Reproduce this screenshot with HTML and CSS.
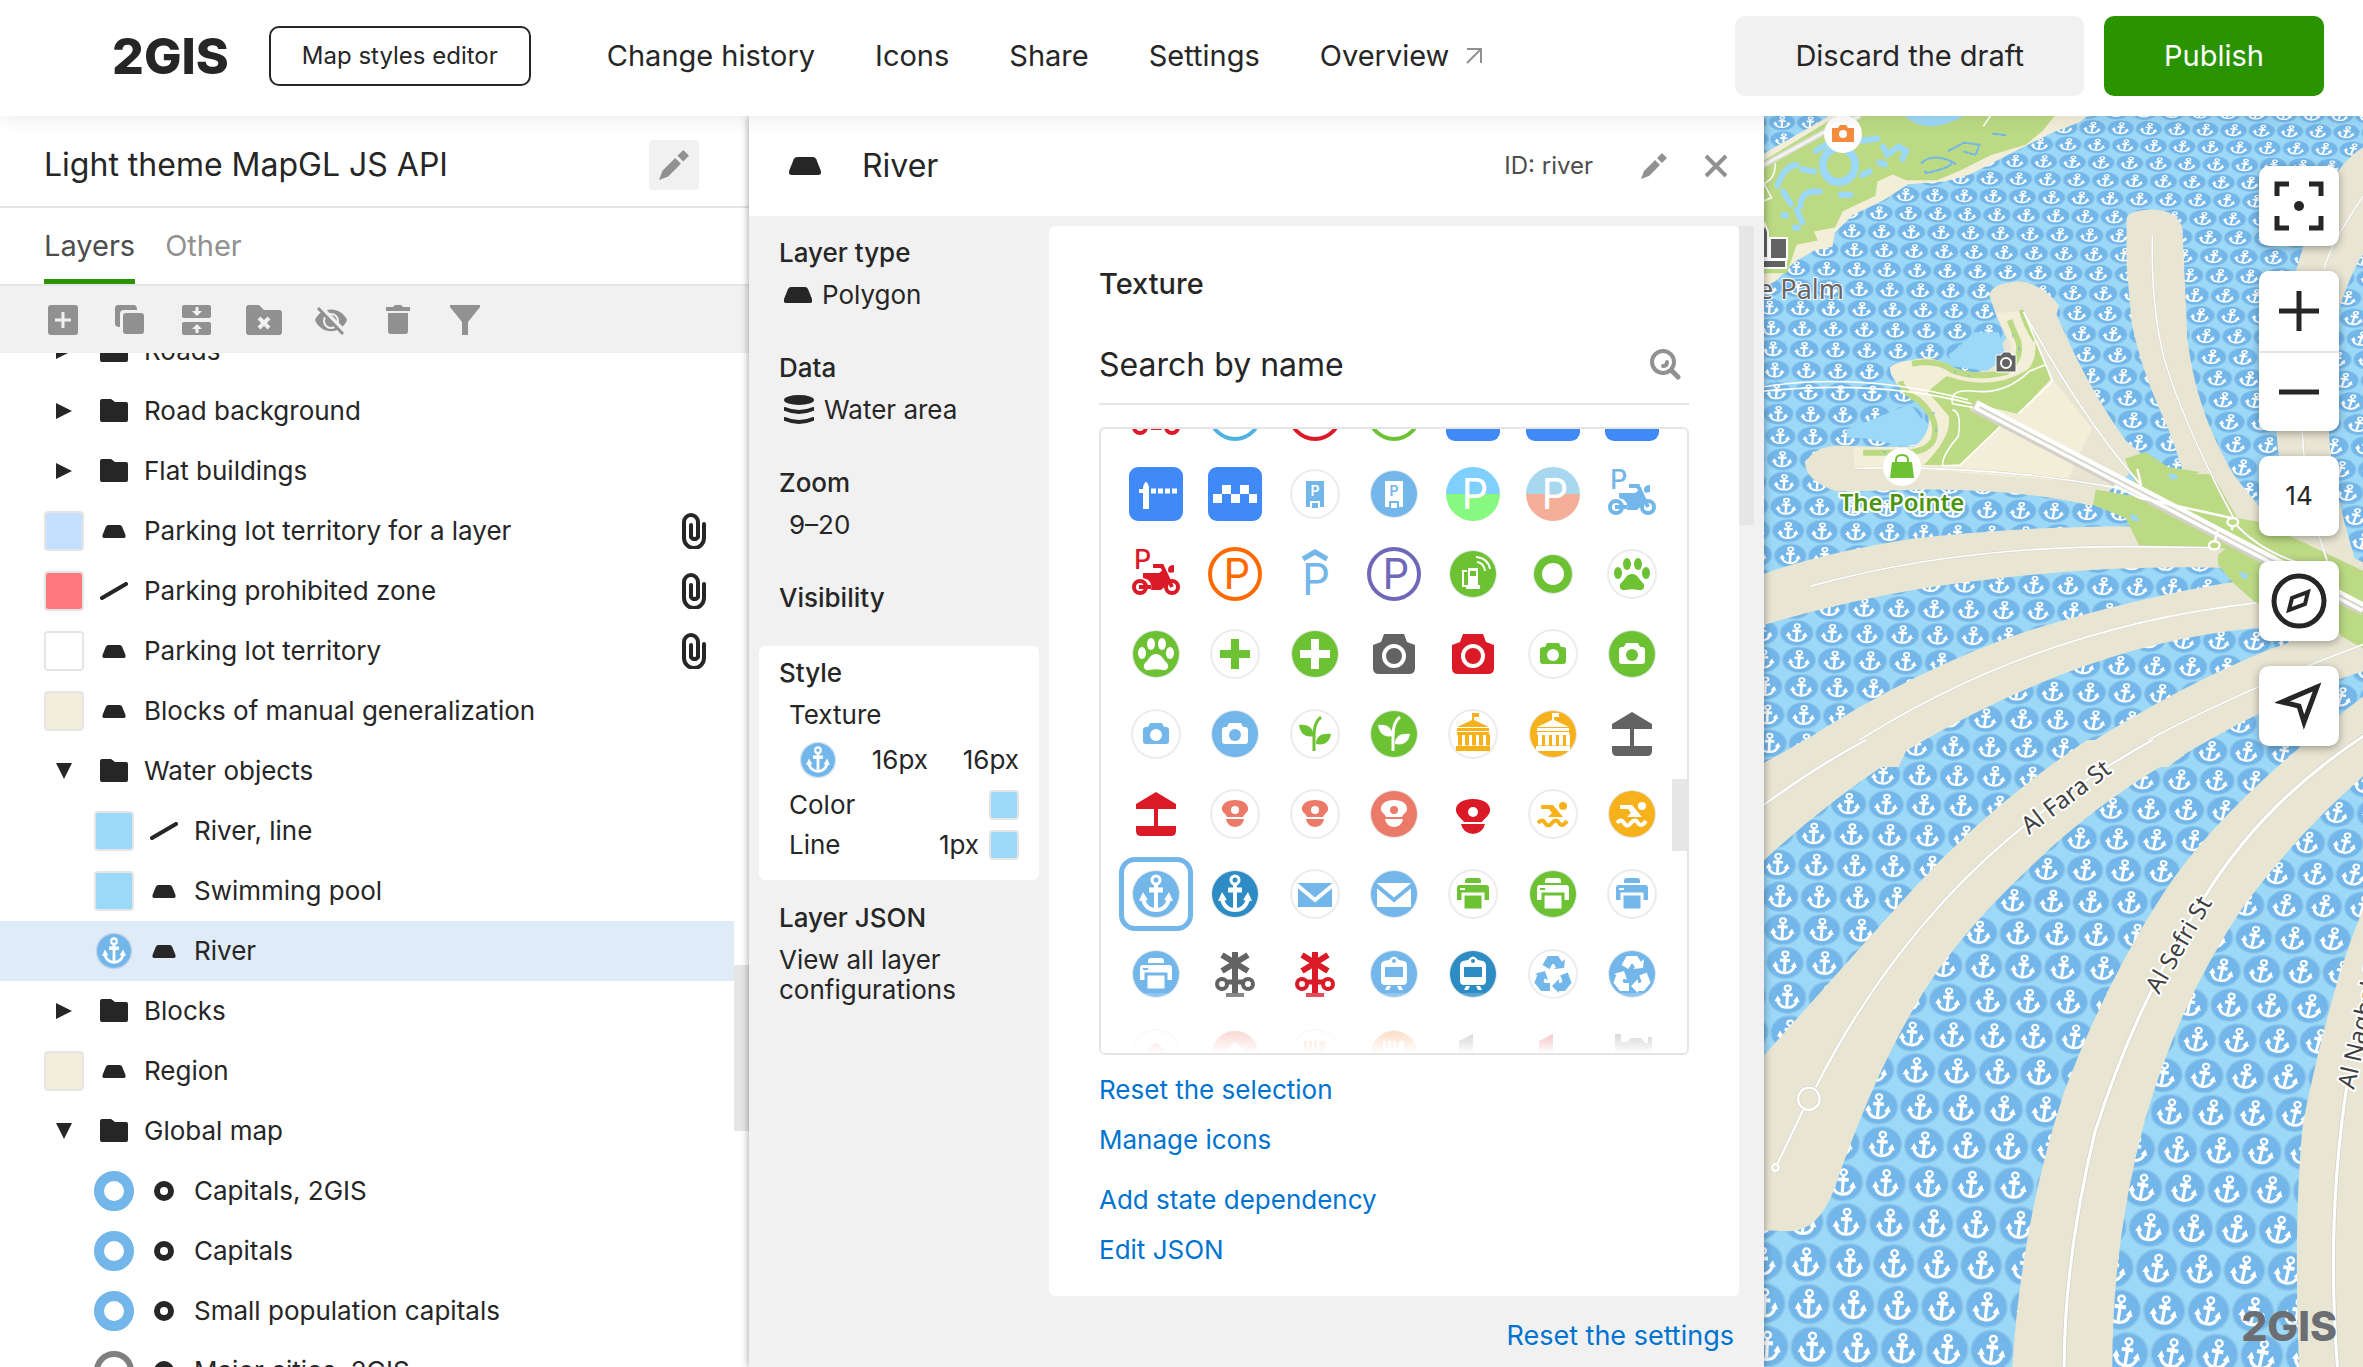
FILE: index.html
```html
<!DOCTYPE html>
<html lang="en">
  <head>
    <meta charset="UTF-8" />
    <meta name="viewport" content="width=device-width, initial-scale=1.0" />
    <title>Map styles editor</title>
    <link rel="stylesheet" href="styles.css">
  </head>
  <body>
    <svg class="sprite" aria-hidden="true">
      <symbol id="folder" viewBox="0 0 28 24">
        <path d="M2 0h9l4 3h11a2 2 0 0 1 2 2v16a2 2 0 0 1-2 2H2a2 2 0 0 1-2-2V2a2 2 0 0 1 2-2z" />
      </symbol>
      <symbol id="polygon" viewBox="0 0 28 16">
        <path d="M7 0h14q2 0 3 2l4 10q1 4-2 4H2q-3 0-2-4L4 2q1-2 3-2z" />
      </symbol>
      <symbol id="line" viewBox="0 0 28 18">
        <path d="M2 16L26 2" stroke="#262626" stroke-width="4" stroke-linecap="round" />
      </symbol>
      <symbol id="point" viewBox="0 0 20 20">
        <circle cx="10" cy="10" r="7" fill="none" stroke="#262626" stroke-width="6" />
      </symbol>
      <symbol id="clip" viewBox="0 0 24 36">
        <path d="M22 11v14a9 9 0 0 1-20 0V9a7 7 0 0 1 14 0v15a4 4 0 0 1-7 0V12" fill="none" stroke="#262626" stroke-width="4" stroke-linecap="round" />
      </symbol>
      <symbol id="closed" viewBox="0 0 16 16"><path d="M0 0l16 8-16 8z" /></symbol>
      <symbol id="opened" viewBox="0 0 16 16"><path d="M0 0h16L8 16z" /></symbol>
      <symbol id="pencil" viewBox="0 0 26 26">
        <path d="M21 0l5 5-5 5-5-5zM14 7l5 5L8 23l-8 3 3-8z" />
      </symbol>
      <symbol id="anchor" viewBox="0 0 54 54">
        <g fill="none" stroke="#fff">
          <circle cx="27" cy="13" r="4" stroke-width="3" />
          <path d="M27 17v24" stroke-width="4" />
          <path d="M20 23h14" stroke-width="5" />
          <path d="M14 32c2 8 7 11 13 11s11-3 13-11" stroke-width="4" />
        </g>
        <path d="M10 34l4-9 5 8zM44 34l-4-9-5 8z" fill="#fff" />
      </symbol>
      <symbol id="river" viewBox="0 0 54 54">
        <circle cx="27" cy="27" r="26" fill="#6495c4" opacity=".25" />
        <circle cx="27" cy="27" r="24" fill="#72b6ea" />
        <use href="#anchor" />
      </symbol>
    </svg>

    <header class="header">
      <a class="logo" href="#">2GIS</a>
      <button class="product">Map styles editor</button>
      <nav class="nav">
        <a href="#">Change history</a>
        <a href="#">Icons</a>
        <a href="#">Share</a>
        <a href="#">Settings</a>
        <a href="#">Overview
          <svg width="18" height="18" viewBox="0 0 18 18" fill="none" stroke="#919191" stroke-width="2"><path d="M2 2h14v14M16 2L2 16" /></svg>
        </a>
      </nav>
      <button class="btn">Discard the draft</button>
      <button class="btn btn-primary">Publish</button>
    </header>

    <main class="main">
      <section class="layers">
        <div class="theme">
          <h1>Light theme MapGL JS API</h1>
          <button class="edit" aria-label="Rename"><svg width="30" height="30"><use href="#pencil" /></svg></button>
        </div>
        <div class="tabs">
          <button class="tab active">Layers</button>
          <button class="tab">Other</button>
        </div>
        <div class="toolbar">
          <button aria-label="Add"><svg width="30" height="30" viewBox="0 0 30 30"><rect width="30" height="30" rx="3" /><path d="M15 7v16M7 15h16" stroke="#f1f1f1" stroke-width="3" /></svg></button>
          <button aria-label="Copy"><svg width="30" height="30" viewBox="0 0 30 30"><path d="M3 0h16q3 0 3 5H9q-4 0-4 4v13q-5 0-5-3V3q0-3 3-3z" /><rect x="8" y="8" width="21" height="21" rx="3" /></svg></button>
          <button aria-label="Group"><svg width="30" height="30" viewBox="0 0 30 30"><rect y="0" width="29" height="13" rx="2" /><rect y="17" width="29" height="13" rx="2" /><path d="M15 2v6M15 28v-6" stroke="#f1f1f1" stroke-width="3" /><path d="M10 6h10l-5 5zM10 24h10l-5-5z" fill="#f1f1f1" /></svg></button>
          <button aria-label="Ungroup"><svg width="36" height="30" viewBox="0 0 36 30"><path d="M3 0h10l5 5h15q3 0 3 3v19q0 3-3 3H3q-3 0-3-3V3q0-3 3-3z" /><path d="M13 13l10 10M23 13L13 23" stroke="#f1f1f1" stroke-width="4" /></svg></button>
          <button aria-label="Hide"><svg width="32" height="30" viewBox="0 0 32 30"><path d="M0 15C6 1 26 1 32 15 26 30 6 30 0 15z" /><circle cx="16" cy="16" r="7" fill="none" stroke="#f1f1f1" stroke-width="2" /><circle cx="16" cy="16" r="2" fill="#f1f1f1" /><path d="M6 2l25 26" stroke="#f1f1f1" stroke-width="4" /><path d="M3 3l25 26" stroke="#919191" stroke-width="3" /></svg></button>
          <button aria-label="Delete"><svg width="24" height="30" viewBox="0 0 24 30"><path d="M2 8h20v18q0 3-3 3H5q-3 0-3-3zM0 2h7l2-2h6l2 2h7v4H0z" /></svg></button>
          <button aria-label="Filter"><svg width="30" height="30" viewBox="0 0 30 30"><path d="M0 0h30v2L18 17v13h-6V17L0 2z" /></svg></button>
        </div>
        <div class="tree-box">
          <ul class="tree">
            <li><svg class="mark" width="16" height="16"><use href="#closed" /></svg><svg class="kind" width="28" height="24"><use href="#folder" /></svg>Roads</li>
            <li><svg class="mark" width="16" height="16"><use href="#closed" /></svg><svg class="kind" width="28" height="24"><use href="#folder" /></svg>Road background</li>
            <li><svg class="mark" width="16" height="16"><use href="#closed" /></svg><svg class="kind" width="28" height="24"><use href="#folder" /></svg>Flat buildings</li>
            <li><span class="swatch pale-blue"></span><svg class="kind" width="28" height="13"><use href="#polygon" /></svg>Parking lot territory for a layer<svg class="clip" width="24" height="36"><use href="#clip" /></svg></li>
            <li><span class="swatch red"></span><svg class="kind" width="28" height="18"><use href="#line" /></svg>Parking prohibited zone<svg class="clip" width="24" height="36"><use href="#clip" /></svg></li>
            <li><span class="swatch"></span><svg class="kind" width="28" height="13"><use href="#polygon" /></svg>Parking lot territory<svg class="clip" width="24" height="36"><use href="#clip" /></svg></li>
            <li><span class="swatch sand"></span><svg class="kind" width="28" height="13"><use href="#polygon" /></svg>Blocks of manual generalization</li>
            <li><svg class="mark" width="16" height="16"><use href="#opened" /></svg><svg class="kind" width="28" height="24"><use href="#folder" /></svg>Water objects</li>
            <li class="nested"><span class="swatch water"></span><svg class="kind" width="28" height="18"><use href="#line" /></svg>River, line</li>
            <li class="nested"><span class="swatch water"></span><svg class="kind" width="28" height="13"><use href="#polygon" /></svg>Swimming pool</li>
            <li class="nested selected"><svg class="mark" width="38" height="38"><use href="#river" /></svg><svg class="kind" width="28" height="13"><use href="#polygon" /></svg>River</li>
            <li><svg class="mark" width="16" height="16"><use href="#closed" /></svg><svg class="kind" width="28" height="24"><use href="#folder" /></svg>Blocks</li>
            <li><span class="swatch sand"></span><svg class="kind" width="28" height="13"><use href="#polygon" /></svg>Region</li>
            <li><svg class="mark" width="16" height="16"><use href="#opened" /></svg><svg class="kind" width="28" height="24"><use href="#folder" /></svg>Global map</li>
            <li class="nested"><span class="ring"></span><svg class="kind" width="20" height="20"><use href="#point" /></svg>Capitals, 2GIS</li>
            <li class="nested"><span class="ring"></span><svg class="kind" width="20" height="20"><use href="#point" /></svg>Capitals</li>
            <li class="nested"><span class="ring"></span><svg class="kind" width="20" height="20"><use href="#point" /></svg>Small population capitals</li>
            <li class="nested"><span class="ring gray"></span><svg class="kind" width="20" height="20"><use href="#point" /></svg>Major cities, 2GIS</li>
          </ul>
          <div class="thumb tree-thumb"></div>
        </div>
      </section>

      <section class="editor">
        <div class="editor-head">
          <svg width="32" height="18"><use href="#polygon" /></svg>
          <h2>River</h2>
          <span class="layer-id">ID: river</span>
          <button aria-label="Edit ID"><svg width="26" height="26"><use href="#pencil" /></svg></button>
          <button aria-label="Close"><svg width="24" height="24" viewBox="0 0 24 24"><path d="M2 2l20 20M22 2L2 22" stroke="#919191" stroke-width="4" /></svg></button>
        </div>
        <div class="editor-body">
          <div class="props">
            <div class="prop">
              <h3>Layer type</h3>
              <p class="with-icon"><svg width="28" height="16"><use href="#polygon" /></svg>Polygon</p>
            </div>
            <div class="prop">
              <h3>Data</h3>
              <p class="with-icon"><svg width="30" height="30" viewBox="0 0 30 30"><ellipse cx="15" cy="5" rx="15" ry="5" /><path d="M1 14q14 6 28 0M1 24q14 6 28 0" fill="none" stroke="#262626" stroke-width="4" stroke-linecap="round" /></svg>Water area</p>
            </div>
            <div class="prop">
              <h3>Zoom</h3>
              <p class="inset">9–20</p>
            </div>
            <div class="prop empty">
              <h3>Visibility</h3>
            </div>
            <div class="prop current">
              <h3>Style</h3>
              <p class="inset">Texture</p>
              <div class="row texture"><svg width="38" height="38"><use href="#river" /></svg><span>16px</span><span>16px</span></div>
              <div class="row"><span>Color</span><span class="swatch small water"></span></div>
              <div class="row"><span>Line</span><span class="value">1px</span><span class="swatch small water"></span></div>
            </div>
            <div class="prop">
              <h3>Layer JSON</h3>
              <p>View all layer configurations</p>
            </div>
          </div>
          <div class="card-box">
            <div class="card">
              <h3>Texture</h3>
              <label class="search">
                <input type="text" placeholder="Search by name" aria-label="Search by name">
                <svg width="32" height="32" viewBox="0 0 32 32" fill="none" stroke="#919191" stroke-linecap="round"><circle cx="14" cy="14" r="11" stroke-width="4" /><path d="M23 23l6 6" stroke-width="5" /><path d="M18 14q0 4-4 4" stroke-width="4" /></svg>
              </label>
              <div class="icons-box">
                <div class="icons" id="icons"></div>
                <div class="fade"></div>
                <div class="thumb icons-thumb"></div>
              </div>
              <div class="links">
                <a href="#">Reset the selection</a>
                <a href="#">Manage icons</a>
              </div>
              <div class="links">
                <a href="#">Add state dependency</a>
                <a href="#">Edit JSON</a>
              </div>
            </div>
            <div class="thumb card-thumb"></div>
          </div>
        </div>
        <a class="reset" href="#">Reset the settings</a>
      </section>

      <section class="map">
        <svg class="map-canvas" viewBox="0 0 599 1251" preserveAspectRatio="xMinYMin slice">
          <rect width="599" height="1251" fill="#9cd8f8" />
          <g id="water"></g>

          <!-- palm island, upper part -->
          <g transform="translate(-4 -6) scale(.385 .408)">
            <path fill="#f2eed8" d="M0 112L180 15H850L830 30L760 55L640 112L545 158L480 175L385 182L320 222L240 258L195 300L188 335L140 345L90 372L40 420L0 440Z" />
            <path fill="#bcda84" d="M0 130L200 15H765L735 50L690 85L600 110L520 148L460 172L380 172L345 158L305 175L300 210L215 248L195 288L140 298L150 320L95 330L70 400H0Z" />
            <path fill="#9cd8f8" d="M375 15q60 50 155 0z" />
            <g fill="none" stroke="#9cd8f8" stroke-linecap="round">
              <circle cx="205" cy="135" r="42" stroke-width="20" />
              <path d="M45 185q20-50 50-50M60 200l20 30M105 235q0-40 50-35M210 208h25M95 245l15 30M60 258h8M90 288h8M110 145l30 6M265 75l40-5M320 90l10 20 30-20 20 10-10 20M265 160l20-10M145 100l25-14M310 128l15 6" stroke-width="15" />
              <path d="M605 58l35 4M420 130q20-20 60-10t-10 25-40 5M490 100l40-20 40 5-10 25-30-8M495 125l15 8" stroke="#72b6ea" stroke-width="5" stroke-dasharray="14 5" />
            </g>
            <path d="M0 140L190 42L260 15" fill="none" stroke="#ddd" stroke-width="14" />
            <path d="M0 140L190 42L260 15" fill="none" stroke="#f4f4f0" stroke-width="6" />
            <path d="M40 130q0 40-30 50l20 35-20 8M580 40l22-30" fill="none" stroke="#fff" stroke-width="4" />

            <g fill="#e8e5d3">
              <path d="M1568 90Q1500 130 1460 220Q1400 340 1370 480Q1330 700 1345 830Q1370 960 1430 1080L1550 1115Q1480 900 1478 790Q1475 560 1510 470Q1540 390 1568 350Z" />
              <path d="M952 265Q960 245 1020 244Q1085 246 1097 290L1101 370L1110 560Q1130 720 1210 860Q1250 930 1300 975L1420 1090L1250 1010L1130 895L1097 880Q1080 830 1060 780Q990 640 965 520L952 380Z" />
              <path d="M596 455Q600 425 670 420Q735 424 777 480L770 500Q850 680 950 810L1000 850L950 900L860 970Q700 932 440 930L200 935Q120 910 117 865Q140 825 200 822L420 828L640 560L612 500Z" />
              <path d="M0 1140Q160 1085 400 1050Q700 1020 955 1020L1210 1075L1210 1122Q900 1115 600 1150Q300 1180 0 1265Z" />
              <path d="M-10 1610L100 1555Q400 1370 700 1275Q1000 1190 1240 1155L1330 1190L1310 1268Q1100 1285 900 1345Q650 1420 380 1570L360 1610Z" />
              <path d="M780 1610L830 1568Q1100 1405 1330 1320L1568 1240V1375Q1350 1440 1110 1575L1060 1610Z" />
            </g>
            <path fill="#9cd8f8" d="M490 600l70-55 60 0 20 60-50 35-90-12zM340 740l50-20 40 50 5 45-60 10-100-20-50-2v-20z" />
            <path fill="#f2eed8" d="M338 630Q350 618 400 612Q450 600 500 630Q560 660 620 650Q660 620 650 570L612 498L680 492L760 660L862 780L800 910L400 880L245 880L243 828L400 825Q450 790 435 740Q400 700 365 682Q335 650 338 630Z" />
            <path fill="#e8e5d3" d="M862 780L950 870L860 935L798 910Z" />
            <g fill="none" stroke="#bcda84" stroke-width="15">
              <path d="M395 622Q460 610 500 638Q560 660 640 642Q680 610 672 570L648 515" />
              <path d="M365 665Q370 690 410 710Q470 760 450 810Q430 840 370 840H268" />
              <path d="M678 490Q690 530 715 565" stroke-width="12" />
            </g>
            <g fill="#bcda84">
              <path d="M435 690L485 652Q600 690 690 640Q720 620 715 560L755 660L670 745L560 720L545 735L625 775L520 870H425Q500 800 490 750Z" />
              <path d="M948 855L1000 838L1060 875L1175 892L1240 1000L1300 1010L1568 1120V1320L1510 1290L1440 1200L1290 1210L1230 1160L1190 1115V1090L1210 1075L985 1068L950 1000L865 968L872 930L990 950Z" />
            </g>
            <path fill="#e8e5d3" d="M1130 893L1175 892L1240 1000L1300 1010L1568 1130V1110L1300 975L1200 860Z" />
            <path fill="#9cd8f8" d="M1058 892l20 0 10 10-20 4zM960 990l20 5 5 14-20-4zM1242 1130l28 10-12 14z" />
            <path fill="#72b6ea" opacity=".6" d="M505 640h5v5h-5zM540 650h5v4h-5zM655 545l5 10-5 3zM670 580h5v10h-5zM448 740h6v6h-6zM455 780h5v8h-5zM320 836h6v5h-6z" />

            <g fill="none" stroke="#d4d2c8" stroke-width="6">
              <path id="r1" d="M1019 308Q1015 480 1050 610Q1100 770 1230 1000M685 495Q830 740 955 880L990 920M245 878Q600 870 920 925L990 945M132 1167Q500 1070 950 1070L1180 1073M220 1568Q700 1270 1290 1208M960 1568Q1250 1420 1568 1310M1568 210Q1480 330 1465 390M1408 780Q1415 950 1475 1110M1240 1020Q1300 1080 1400 1110" />
            </g>
            <path d="M1019 308Q1015 480 1050 610Q1100 770 1230 1000M685 495Q830 740 955 880L990 920M245 878Q600 870 920 925L990 945M132 1167Q500 1070 950 1070L1180 1073M220 1568Q700 1270 1290 1208M960 1568Q1250 1420 1568 1310M1568 210Q1480 330 1465 390M1408 780Q1415 950 1475 1110M1240 1020Q1300 1080 1400 1110" fill="none" stroke="#fff" stroke-width="4" />
            <path d="M565 690Q640 695 700 640L740 625M760 665L670 745M685 495L760 665M625 775L520 870L475 872Q470 850 515 800Q525 740 500 735M500 720Q490 680 565 690M560 730L500 720M0 690Q300 660 550 720M0 680Q250 640 540 710" fill="none" stroke="#fff" stroke-width="4" />
            <path d="M555 725L1568 1225" stroke="#d4d2c8" stroke-width="30" />
            <path d="M560 722L1568 1220" stroke="#fff" stroke-width="24" />
            <path d="M570 728L1568 1221" stroke="#d8d6cc" stroke-width="5" />
            <path d="M920 920l65 30 240 50M990 920l-10-40M1180 1060l10-30M1225 1030l10-30" fill="none" stroke="#fff" stroke-width="6" />
            <ellipse cx="1228" cy="1010" rx="14" ry="10" fill="#bcda84" stroke="#fff" stroke-width="6" />
            <ellipse cx="1180" cy="1067" rx="14" ry="10" fill="#bcda84" stroke="#fff" stroke-width="6" />
          </g>

          <!-- fronds, lower part -->
          <g transform="translate(-4 624) scale(.385 .4)">
            <g fill="#e8e5d3">
              <path d="M0 65L115 0H425Q200 130 0 310Z" />
              <path d="M850 0Q600 160 400 370Q250 530 0 800V1225L80 1228Q150 1225 190 1130Q290 850 400 670Q500 500 700 320Q900 130 1165 0Z" />
              <path d="M1568 -110Q1200 160 1050 380Q900 600 790 880Q680 1200 655 1568H915Q915 1250 1000 950Q1090 650 1260 410Q1400 230 1568 90Z" />
              <path d="M1568 420Q1480 620 1410 960Q1385 1200 1400 1568H1568Z" />
            </g>
            <g fill="none" stroke="#d4d2c8">
              <path d="M0 170Q130 75 275 0M1020 0Q700 170 480 400Q280 610 145 868M112 925L45 1060" stroke-width="9" />
              <path d="M1568 -10Q1300 160 1150 400Q980 650 870 980Q790 1300 790 1568M1525 860Q1470 1200 1500 1568" stroke-width="12" />
              <ellipse cx="127" cy="897" rx="28" ry="28" stroke-width="9" />
              <circle cx="40" cy="1069" r="9" stroke-width="9" />
            </g>
            <g fill="none" stroke="#fff">
              <path d="M0 170Q130 75 275 0M1020 0Q700 170 480 400Q280 610 145 868M112 925L45 1060" stroke-width="6" />
              <path d="M1568 -10Q1300 160 1150 400Q980 650 870 980Q790 1300 790 1568M1525 860Q1470 1200 1500 1568" stroke-width="8" />
              <ellipse cx="127" cy="897" rx="28" ry="28" stroke-width="6" />
              <circle cx="40" cy="1069" r="9" fill="#e8e5d3" stroke-width="6" />
            </g>
          </g>

          <g class="street">
            <text transform="translate(265 719) rotate(-37)">Al Fara St</text>
            <text transform="translate(395 879) rotate(-60)">Al Sefri St</text>
            <text transform="translate(590 974) rotate(-77)">Al Naghal St</text>
          </g>

          <g stroke="#fff" stroke-width="2" fill="#636363">
            <path d="M-8 144h30v8h-30zM6 122h17v21H6zM-2 142v-26l3-8 3 8v26z" />
          </g>
          <text class="place" x="80" y="183" text-anchor="end">The Palm</text>
          <circle cx="79" cy="18" r="19" fill="#fff" />
          <path d="M68 12h6l2-3h6l2 3h6v14H68z" fill="#f58b3d" /><circle cx="79" cy="18" r="4" fill="#fff" />
          <path d="M232 239h5l2-3h7l2 3h4v17h-20z" fill="#636363" stroke="#fff" stroke-width="1" /><circle cx="242" cy="247" r="5" fill="none" stroke="#fff" stroke-width="2" />
          <circle cx="138" cy="351" r="19" fill="#fff" />
          <path d="M128 346h20l2 16h-24z" fill="#6dc233" /><path d="M132 348v-4q0-5 6-5t6 5v4" fill="none" stroke="#6dc233" stroke-width="2" />
          <text class="mall" x="138" y="395" text-anchor="middle">The Pointe</text>
        </svg>
        <div class="controls">
          <button aria-label="Fit"><svg width="50" height="50" viewBox="0 0 50 50" fill="none" stroke="#262626" stroke-width="5"><path d="M3 15V3h12M35 3h12v12M47 35v12H35M15 47H3V35" /><circle cx="25" cy="25" r="5" fill="#262626" stroke="none" /></svg></button>
          <div class="zoom">
            <button aria-label="Zoom in"><svg width="40" height="40" viewBox="0 0 40 40"><path d="M20 0v40M0 20h40" stroke="#262626" stroke-width="5" /></svg></button>
            <button aria-label="Zoom out"><svg width="40" height="40" viewBox="0 0 40 40"><path d="M0 20h40" stroke="#262626" stroke-width="5" /></svg></button>
          </div>
          <button>14</button>
          <button aria-label="Compass"><svg width="56" height="56" viewBox="0 0 56 56" fill="none" stroke="#262626"><circle cx="28" cy="28" r="25" stroke-width="5" /><path d="M18 37l3-12 16-6-3 12z" stroke-width="4" /></svg></button>
          <button aria-label="My location"><svg width="48" height="48" viewBox="0 0 48 48"><path d="M42 5L7 20l17 4 5 16z" fill="none" stroke="#262626" stroke-width="5" /></svg></button>
        </div>
        <div class="watermark">2GIS</div>
      </section>
    </main>

    <script>
      const green = "#6dc233";
      const blue = "#72b6ea";
      const navy = "#2d8cc4";
      const red = "#db1a27";
      const gray = "#636363";
      const orange = "#f7b11b";
      const coral = "#ec7a68";
      const road = "#3f8af7";

      // every glyph is drawn in a 54x54 box: f is its colour, b what shows through
      const glyphs = {
        none: () => "",
        letter: (f) => `<text x="29" y="42" font-size="42" text-anchor="middle" fill="${f}">P</text>`,
        roof: (f) => `<text x="28" y="48" font-size="44" text-anchor="middle" fill="${f}">P</text><path d="M15 12l12-7 12 7" fill="none" stroke="${f}" stroke-width="5"/>`,
        barrier: (f) => `<path d="M14 20q3-10 6 0v22h-6zM10 22h5v4h-5z" fill="${f}"/><path d="M22 24h26" stroke="${f}" stroke-width="5" stroke-dasharray="5 2"/>`,
        taxi: (f) => `<path d="M5 27h9v9H5zM14 18h9v9h-9zM23 27h9v9h-9zM32 18h9v9h-9zM41 27h8v9h-8z" fill="${f}"/>`,
        meter: (f, b) => `<path d="M18 14h18v26h-4v-6H22v6h-4z" fill="${f}"/><path d="M24 36h6v5h-6z" fill="${f}"/><text x="27" y="29" font-size="14" font-weight="600" text-anchor="middle" fill="${b}">P</text>`,
        moto: (f, b) => `<text x="5" y="22" font-size="27" font-weight="500" fill="${f}">P</text><g fill="none" stroke="${f}" stroke-width="4"><circle cx="11" cy="40" r="6"/><circle cx="43" cy="40" r="6"/><path d="M10 40h12M24 19h9l10 21"/></g><path d="M14 26h16l4-3 7 12-9 8H22q2-10-8-12zM39 23q0-5 6-5v7q-6 2-6-2z" fill="${f}"/>`,
        fuel: (f, b) => `<path d="M22 21h10v21H22zM20 38h14v4H20z" fill="${f}"/><path d="M24 24h6v5h-6z" fill="${b}"/><path d="M21 24h-4v15h3M31 15q7 1 8 9M30 10q12 1 14 12" fill="none" stroke="${f}" stroke-width="2"/>`,
        ring: (f) => `<circle cx="27" cy="27" r="11" fill="${f}"/>`,
        paw: (f) => `<g fill="${f}"><ellipse cx="13" cy="26" rx="4" ry="6"/><ellipse cx="22" cy="17" rx="4" ry="6"/><ellipse cx="33" cy="17" rx="4" ry="6"/><ellipse cx="41" cy="26" rx="4" ry="6"/><path d="M27 27c6 0 7 6 11 9 3 4 0 8-4 7-5-1-9-1-14 0-4 1-7-3-4-7 4-3 5-9 11-9z"/></g>`,
        cross: (f) => `<path d="M23 12h8v11h11v8H31v11h-8V31H12v-8h11z" fill="${f}"/>`,
        bigcamera: (f, b) => `<path d="M17 7h20l3 8 8 3v23q0 6-6 6H12q-6 0-6-6V18l8-3z" fill="${f}"/><circle cx="27" cy="29" r="10" fill="${f}" stroke="#fff" stroke-width="4"/>`,
        camera: (f, b) => `<path d="M21 16h12l2 4h2q3 0 3 3v11q0 3-3 3H17q-3 0-3-3V23q0-3 3-3h2z" fill="${f}"/><circle cx="27" cy="28" r="6" fill="${b}"/>`,
        plant: (f) => `<path d="M26 44V29q0-14 7-19" fill="none" stroke="${f}" stroke-width="3"/><path d="M26 29C16 31 12 25 11 18c10-1 14 3 15 11zM28 37c0-8 6-11 15-10-1 7-6 12-15 10z" fill="${f}"/>`,
        hall: (f) => `<path d="M26 6h7v4h-5v3l15 7H11l15-7zM11 21h32v3H11zM11 25h32v3H11zM10 39h34v5H10z" fill="${f}"/><path d="M12 33h32" stroke="${f}" stroke-width="11" stroke-dasharray="4 3"/>`,
        umbrella: (f) => `<path d="M27 5l20 12v5H7v-5zM25 22h4v17h-4zM7 39h40v5q0 5-5 5H12q-5 0-5-5z" fill="${f}"/>`,
        cap: (f, b) => `<path d="M27 13c8 0 14 4 13 10-1 3-4 4-5 7H19c-1-3-4-4-5-7-1-6 5-10 13-10zM18 32h18q-1 7-9 8-8-1-9-8z" fill="${f}"/><circle cx="27" cy="23" r="4" fill="${b}"/>`,
        bigcap: (f) => `<path d="M27 12c11 0 18 5 17 12-1 5-5 7-8 11H18c-3-4-7-6-8-11-1-7 6-12 17-12zM15 37h24q-2 9-12 10-10-1-12-10z" fill="${f}"/><circle cx="27" cy="25" r="5" fill="#fff"/>`,
        swim: (f) => `<path d="M15 18h12l10 12H22l4-4-3-4h-8z" fill="${f}"/><circle cx="37" cy="19" r="4" fill="${f}"/><path d="M12 36q4-5 7 0t7 0 7 0 8-2" fill="none" stroke="${f}" stroke-width="4"/>`,
        anchor: () => `<use href="#anchor"/>`,
        mail: (f, b) => `<path d="M10 16h34v24H10z" fill="${f}"/><path d="M9 18l18 15 18-15" fill="none" stroke="${b}" stroke-width="4"/><path d="M11 16h32L27 30z" fill="${f}"/>`,
        printer: (f, b) => `<path d="M19 14q0-3 3-3h10q3 0 3 3v2H19zM11 21q0-3 3-3h26q3 0 3 3v12H11z" fill="${f}"/><path d="M17 27h20v16H17z" fill="${f}" stroke="${b}" stroke-width="3"/><path d="M14 22h5" stroke="${b}" stroke-width="2"/>`,
        crossing: (f) => `<path d="M27 5v41M14 8l26 16M40 8L14 24" stroke="${f}" stroke-width="6"/><path d="M18 46h18v4H18z" fill="${f}"/><path d="M18 35h18" stroke="${f}" stroke-width="5"/><circle cx="14" cy="37" r="5" fill="none" stroke="${f}" stroke-width="4"/><circle cx="40" cy="37" r="5" fill="none" stroke="${f}" stroke-width="4"/>`,
        train: (f, b) => `<path d="M22 13q5-7 10 0l5 1q3 1 3 5v15q0 4-4 4H18q-4 0-4-4V19q0-4 3-5zM20 39h4l-2 4h-4zM34 39h-4l2 4h4z" fill="${f}"/><circle cx="27" cy="14" r="2" fill="${b}"/><path d="M18 20h18v10H18z" fill="${b}"/>`,
        recycle: (f) => `<g fill="none" stroke="${f}" stroke-width="8"><path d="M20 20l4-7h6l4 6"/><path d="M16 27l-3 8 4 5h7"/><path d="M38 27l3 8-4 5h-6"/></g><path d="M28 22l10-1 1-9zM9 27l10-3 3 9zM33 32v14l-7-7z" fill="${f}"/>`,
        house: (f) => `<path d="M27 15l16 14v12H11V29z" fill="${f}"/>`,
        fork: (f) => `<path d="M16 14h3v8h2v-8h3v8h2v-8h3v12q-1 3-4 3v10h-4V29q-4 0-5-3zM31 40V18q0-4 6-4v26z" fill="${f}"/>`,
        sign: (f) => `<path d="M13 14l14-7v40H13z" fill="${f}"/>`,
        skyline: (f) => `<path d="M10 7h6v8h6l4-4h10l4 5h3v-6h4v30H10z" fill="${f}"/>`,
      };

      // shape: w - white disc, c - coloured disc, s - square, o - outline, h - two halves, n - bare
      const icons = [
        ["n", red, "moto"], ["o", "#4fb3e2", "letter"], ["o", red, "letter"], ["o", green, "letter"], ["s", road, "letter"], ["s", road, "letter"], ["s", road, "ring"],
        ["s", road, "barrier"], ["s", road, "taxi"], ["w", blue, "meter"], ["c", blue, "meter"], ["h", "#7fd0ff", "letter", "#87f880"], ["h", "#a8d8ef", "letter", "#f4ae99"], ["n", blue, "moto"],
        ["n", red, "moto"], ["o", "#ff6a00", "letter"], ["n", blue, "roof"], ["o", "#6f68b8", "letter"], ["c", green, "fuel"], ["c", green, "ring"], ["w", green, "paw"],
        ["c", green, "paw"], ["w", green, "cross"], ["c", green, "cross"], ["n", gray, "bigcamera"], ["n", red, "bigcamera"], ["w", green, "camera"], ["c", green, "camera"],
        ["w", blue, "camera"], ["c", blue, "camera"], ["w", green, "plant"], ["c", green, "plant"], ["w", orange, "hall"], ["c", orange, "hall"], ["n", gray, "umbrella"],
        ["n", red, "umbrella"], ["w", coral, "cap"], ["w", coral, "cap"], ["c", coral, "cap"], ["n", red, "bigcap"], ["w", orange, "swim"], ["c", orange, "swim"],
        ["c", blue, "anchor"], ["c", navy, "anchor"], ["w", blue, "mail"], ["c", blue, "mail"], ["w", green, "printer"], ["c", green, "printer"], ["w", blue, "printer"],
        ["c", blue, "printer"], ["n", gray, "crossing"], ["n", red, "crossing"], ["c", blue, "train"], ["c", navy, "train"], ["w", blue, "recycle"], ["c", blue, "recycle"],
        ["w", coral, "house"], ["c", coral, "house"], ["w", "#f58b3d", "fork"], ["c", "#f58b3d", "fork"], ["n", gray, "sign"], ["n", red, "sign"], ["n", gray, "skyline"],
      ];

      function drawIcon([shape, color, glyph, second]) {
        let back = "";
        let front = color;
        let through = "#fff";
        if (shape === "w") back = `<circle cx="27" cy="27" r="25" fill="#ececec"/><circle cx="27" cy="27" r="23" fill="#fff"/>`;
        if (shape === "c") {
          const r = glyph === "ring" ? 19 : 23;
          back = `<circle cx="27" cy="27" r="${r + 1}" fill="#e4e8ea"/><circle cx="27" cy="27" r="${r}" fill="${color}"/>`;
        }
        if (shape === "s") back = `<rect width="54" height="54" rx="9" fill="${color}"/>`;
        if (shape === "o") back = `<circle cx="27" cy="27" r="25" fill="none" stroke="${color}" stroke-width="4"/>`;
        if (shape === "h") back = `<path d="M0 27a27 27 0 0 1 54 0z" fill="${color}"/><path d="M0 27a27 27 0 0 0 54 0z" fill="${second}"/>`;
        if (shape === "c" || shape === "s" || shape === "h") {
          front = "#fff";
          through = color;
        }
        return `<svg width="54" height="54" viewBox="0 0 54 54">${back}${glyphs[glyph](front, through)}</svg>`;
      }

      document.getElementById("icons").innerHTML = icons
        .map((icon, i) => `<button class="icon${i === 42 ? " picked" : ""}" aria-label="${icon[2]}">${drawIcon(icon)}</button>`)
        .join("");

      // the texture is seen in perspective: rows get closer and smaller to the top
      let water = "";
      for (let y = 1232; y > -20; ) {
        const step = 45 - (1232 - y) * 0.0137;
        const rowStep = step * step * 0.0212;
        for (let n = 3; n < 32; n++) {
          const x = -184 + (n + 0.155) * step;
          if (x < -30 || x > 640) continue;
          const top = y + (x - 93) * 0.018;
          const tilt = 2 + x / 50;
          water += `<use href="#river" width="54" height="54" transform="translate(${x.toFixed(1)} ${top.toFixed(1)}) scale(${(step / 54).toFixed(3)} ${(rowStep / 53).toFixed(3)}) rotate(${tilt.toFixed(1)}) translate(-27 -27)"/>`;
        }
        y -= rowStep;
      }
      document.getElementById("water").innerHTML = water;
    </script>
  </body>
</html>
```
FILE: styles.css
```css
* {
  box-sizing: border-box;
}

body {
  display: flex;
  flex-direction: column;
  height: 100vh;
  margin: 0;
  overflow: hidden;
  font-family: Inter, "Liberation Sans", Arial, sans-serif;
  font-size: 26px;
  line-height: 30px;
  color: #262626;
}

h1,
h2,
h3,
p,
ul {
  margin: 0;
  padding: 0;
  font-size: 26px;
  font-weight: 400;
}

svg {
  display: block;
  flex: none;
}

svg:not([fill]) {
  fill: #262626;
}

button {
  display: flex;
  align-items: center;
  justify-content: center;
  padding: 0;
  border: none;
  background: none;
  font: inherit;
  color: inherit;
  cursor: pointer;
}

a {
  color: #0073d1;
  text-decoration: none;
}

.sprite {
  position: absolute;
  width: 0;
  height: 0;
}

/* header */

.header {
  display: flex;
  align-items: center;
  flex: none;
  height: 116px;
  padding: 0 39px 5px 112px;
  background: #fff;
  box-shadow: 0 0 20px rgba(0, 0, 0, 0.1);
  position: relative;
  z-index: 3;
}

.logo {
  font-size: 50px;
  line-height: 60px;
  font-weight: 800;
  color: #262626;
}

.product {
  height: 60px;
  margin-left: 40px;
  padding: 0 31px;
  border: 2px solid #262626;
  border-radius: 10px;
  font-size: 24px;
}

.nav {
  display: flex;
  flex: 1;
  gap: 60px;
  margin-left: 76px;
  font-size: 29px;
}

.nav a {
  display: flex;
  align-items: center;
  gap: 16px;
  color: #262626;
}

.btn {
  height: 80px;
  padding: 0 60px;
  border-radius: 10px;
  background: #f1f1f1;
  font-size: 29px;
}

.btn-primary {
  margin-left: 20px;
  background: #299400;
  color: #fff;
}

.main {
  display: grid;
  grid-template-columns: 749px 1015px 1fr;
  flex: 1;
  min-height: 0;
}

.thumb {
  position: absolute;
  right: 0;
  width: 15px;
  background: #e6e6e6;
}

/* layers */

.layers {
  display: flex;
  flex-direction: column;
  min-height: 0;
  background: #fff;
}

.theme {
  display: flex;
  align-items: center;
  justify-content: space-between;
  height: 92px;
  padding: 8px 50px 0 44px;
  border-bottom: 2px solid #e5e5e5;
}

.theme h1 {
  font-size: 32px;
}

.edit {
  width: 50px;
  height: 50px;
  border-radius: 4px;
  background: #f1f1f1;
}

.edit svg:not([fill]),
.toolbar svg:not([fill]),
.editor-head button svg:not([fill]) {
  fill: #919191;
}

.tabs {
  display: flex;
  gap: 30px;
  height: 78px;
  padding-left: 44px;
  border-bottom: 2px solid #e5e5e5;
}

.tab {
  border-top: 5px solid transparent;
  border-bottom: 5px solid transparent;
  font-size: 29px;
  color: #919191;
}

.tab.active {
  border-bottom-color: #299400;
  color: #4d4d4d;
}

.toolbar {
  display: flex;
  align-items: center;
  gap: 37px;
  height: 67px;
  padding-left: 48px;
  background: #f1f1f1;
}

.toolbar button {
  width: 30px;
}

.tree-box {
  position: relative;
  flex: 1;
  min-height: 0;
  overflow: hidden;
}

.tree {
  margin: -32px 15px 0 0;
  list-style: none;
}

.tree li {
  display: grid;
  grid-template-columns: 40px 60px 1fr 24px;
  align-items: center;
  height: 60px;
  padding: 0 28px 0 44px;
}

.tree li.nested {
  padding-left: 94px;
}

.tree li.selected {
  background: #dfebf7;
}

.mark,
.kind {
  justify-self: center;
}

.swatch {
  width: 40px;
  height: 40px;
  border: 2px solid #e5e5e5;
  border-radius: 4px;
}

.swatch.small {
  width: 30px;
  height: 30px;
}

.pale-blue {
  background: #c4dfff;
}

.red {
  background: #ff787d;
}

.sand {
  background: #f2eedb;
}

.water {
  background: #9cd8f8;
}

.ring {
  width: 40px;
  height: 40px;
  border: 10px solid #72b6ea;
  border-radius: 50%;
}

.ring.gray {
  border-width: 6px;
  border-color: #808080;
}

.tree-thumb {
  top: 612px;
  height: 166px;
}

/* editor */

.editor {
  display: flex;
  flex-direction: column;
  min-height: 0;
  background: #f1f1f1;
  box-shadow: 0 0 8px rgba(0, 0, 0, 0.4);
  position: relative;
  z-index: 2;
}

.editor-head {
  display: flex;
  align-items: center;
  height: 100px;
  padding: 0 36px 0 40px;
  background: #fff;
}

.editor-head h2 {
  flex: 1;
  margin-left: 41px;
  font-size: 32px;
}

.layer-id {
  font-size: 24px;
  color: #4d4d4d;
}

.editor-head button {
  margin-left: 48px;
}

.editor-head button + button {
  margin-left: 37px;
}

.editor-body {
  display: flex;
  gap: 10px;
  padding: 10px;
}

.props {
  display: flex;
  flex-direction: column;
  gap: 11px;
  width: 280px;
}

.prop {
  padding: 12px 20px 20px;
  border-radius: 6px;
}

.prop h3 {
  margin-bottom: 12px;
  font-weight: 500;
}

.prop.empty h3 {
  margin-bottom: 2px;
}

.prop.current {
  background: #fff;
}

.with-icon {
  display: flex;
  align-items: center;
  gap: 10px;
  padding-left: 5px;
}

.inset {
  padding-left: 10px;
}

.row {
  display: flex;
  align-items: center;
  justify-content: space-between;
  padding-left: 10px;
}

.row + .row + .row {
  margin-top: 10px;
}

.texture {
  height: 60px;
  padding-left: 20px;
}

.value {
  flex: 1;
  margin-right: 10px;
  text-align: right;
}

.card-box {
  position: relative;
  flex: 1;
}

.card {
  margin-right: 15px;
  padding: 43px 50px 31px;
  border-radius: 6px;
  background: #fff;
}

.card h3 {
  font-size: 29px;
  font-weight: 500;
}

.card-thumb {
  top: 0;
  height: 299px;
}

.search {
  display: flex;
  align-items: center;
  height: 80px;
  margin-top: 26px;
  padding-right: 8px;
  border-bottom: 2px solid #e5e5e5;
}

.search input {
  flex: 1;
  padding: 0;
  border: none;
  outline: none;
  font: inherit;
  font-size: 32px;
}

.search input::placeholder {
  color: #262626;
}

.icons-box {
  position: relative;
  height: 628px;
  margin-top: 22px;
  border: 2px solid #e5e5e5;
  border-radius: 6px;
  overflow: hidden;
}

.icons {
  display: grid;
  grid-template-columns: repeat(7, 1fr);
  grid-auto-rows: 80px;
  margin: -55px 15px 0;
}

.icon.picked {
  justify-self: center;
  align-self: center;
  width: 74px;
  height: 74px;
  border: 5px solid #72b6ea;
  border-radius: 16px;
}

.fade {
  position: absolute;
  right: 0;
  bottom: 0;
  left: 0;
  height: 60px;
  background: linear-gradient(rgba(255, 255, 255, 0.2), #fff);
}

.icons-thumb {
  top: 350px;
  height: 72px;
}

.links {
  display: flex;
  flex-direction: column;
  align-items: flex-start;
  gap: 20px;
  margin-top: 20px;
}

.links + .links {
  margin-top: 30px;
}

.reset {
  align-self: flex-end;
  margin: 15px 30px 0 0;
  font-size: 27px;
}

/* map */

.map {
  position: relative;
  overflow: hidden;
}

.map-canvas {
  width: 100%;
  height: 100%;
}

.map text {
  paint-order: stroke;
  stroke: #fff;
  stroke-width: 4px;
  stroke-linejoin: round;
  font-family: "Noto Sans", sans-serif;
  font-size: 24px;
  fill: #404040;
}

.map .place {
  font-size: 27px;
  stroke-width: 2px;
  fill: #666;
}

.map .mall {
  font-weight: 600;
  fill: #4a9410;
}

.controls {
  position: absolute;
  top: 50px;
  right: 24px;
  display: flex;
  flex-direction: column;
  gap: 25px;
}

.controls button {
  width: 80px;
  height: 80px;
  border-radius: 10px;
  background: #fff;
  box-shadow: 0 2px 8px rgba(0, 0, 0, 0.35);
}

.zoom {
  border-radius: 10px;
  background: #fff;
  box-shadow: 0 2px 8px rgba(0, 0, 0, 0.35);
}

.controls .zoom button {
  box-shadow: none;
}

.zoom button + button {
  border-top: 2px solid #e5e5e5;
  border-radius: 0 0 10px 10px;
}

.watermark {
  position: absolute;
  right: 26px;
  bottom: 20px;
  font-size: 41px;
  line-height: 42px;
  font-weight: 800;
  color: #6b6f73;
}
```
